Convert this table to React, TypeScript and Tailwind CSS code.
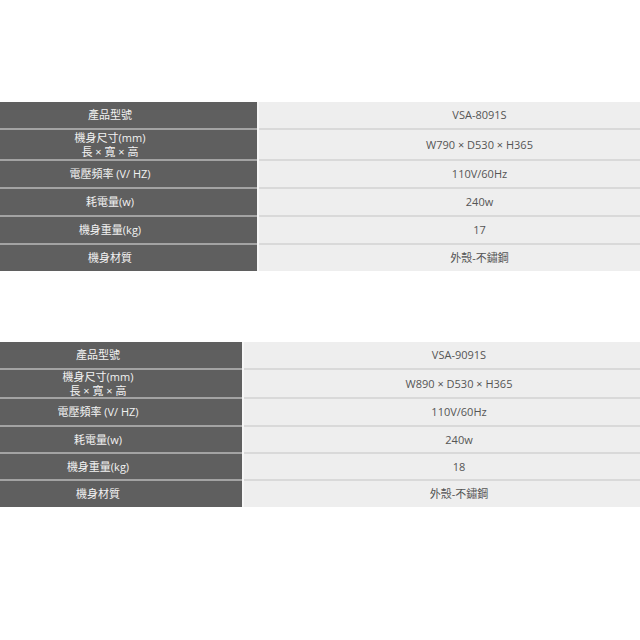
import React from "react";

type Row = { label: React.ReactNode; value: string; h: string };

const font = { fontFamily: '"Open Sans", "Noto Sans CJK TC", sans-serif' };

function Table({ rows, ml, lw, rw }: { rows: Row[]; ml: string; lw: string; rw: string }) {
  return (
    <div className="w-[640px] overflow-hidden">
      <div className={`flex flex-col w-max ${ml}`}>
        {rows.map((r, i) => (
          <React.Fragment key={i}>
            {i > 0 && (
              <div className="flex h-[2px]">
                <div className={`${lw} shrink-0 bg-[#a3a3a3]`} />
                <div className="w-[2px] shrink-0 bg-[#f6f6f6]" />
                <div className={`${rw} shrink-0 bg-[#d9d9d9]`} />
              </div>
            )}
            <div className={`flex ${r.h}`}>
              <div
                className={`${lw} shrink-0 bg-[#5f5f5f] text-[#f2f2f2] text-[11px] leading-[14px] flex items-center justify-center text-center`}
              >
                {r.label}
              </div>
              <div className="w-[2px] shrink-0 bg-[#f6f6f6]" />
              <div
                className={`${rw} shrink-0 bg-[#eeeeee] text-[#555555] text-[11px] leading-[14px] flex items-center justify-center`}
              >
                {r.value}
              </div>
            </div>
          </React.Fragment>
        ))}
      </div>
    </div>
  );
}

const dims = (
  <span>
    機身尺寸(mm)
    <br />
    長 × 寬 × 高
  </span>
);

export default function App() {
  const t1: Row[] = [
    { label: "產品型號", value: "VSA-8091S", h: "h-[26px]" },
    { label: dims, value: "W790 × D530 × H365", h: "h-[29px]" },
    { label: "電壓頻率 (V/ HZ)", value: "110V/60Hz", h: "h-[26px]" },
    { label: "耗電量(w)", value: "240w", h: "h-[26px]" },
    { label: "機身重量(kg)", value: "17", h: "h-[26px]" },
    { label: "機身材質", value: "外殼-不鏽鋼", h: "h-[26px]" },
  ];
  const t2: Row[] = [
    { label: "產品型號", value: "VSA-9091S", h: "h-[26px]" },
    { label: dims, value: "W890 × D530 × H365", h: "h-[27px]" },
    { label: "電壓頻率 (V/ HZ)", value: "110V/60Hz", h: "h-[26px]" },
    { label: "耗電量(w)", value: "240w", h: "h-[25px]" },
    { label: "機身重量(kg)", value: "18", h: "h-[25px]" },
    { label: "機身材質", value: "外殼-不鏽鋼", h: "h-[26px]" },
  ];
  return (
    <div className="w-[640px] h-[640px] bg-white" style={font}>
      <div className="h-[102px]" />
      <Table rows={t1} ml="-ml-[37px]" lw="w-[294px]" rw="w-[441px]" />
      <div className="h-[71px]" />
      <Table rows={t2} ml="-ml-[46px]" lw="w-[288px]" rw="w-[430px]" />
    </div>
  );
}
